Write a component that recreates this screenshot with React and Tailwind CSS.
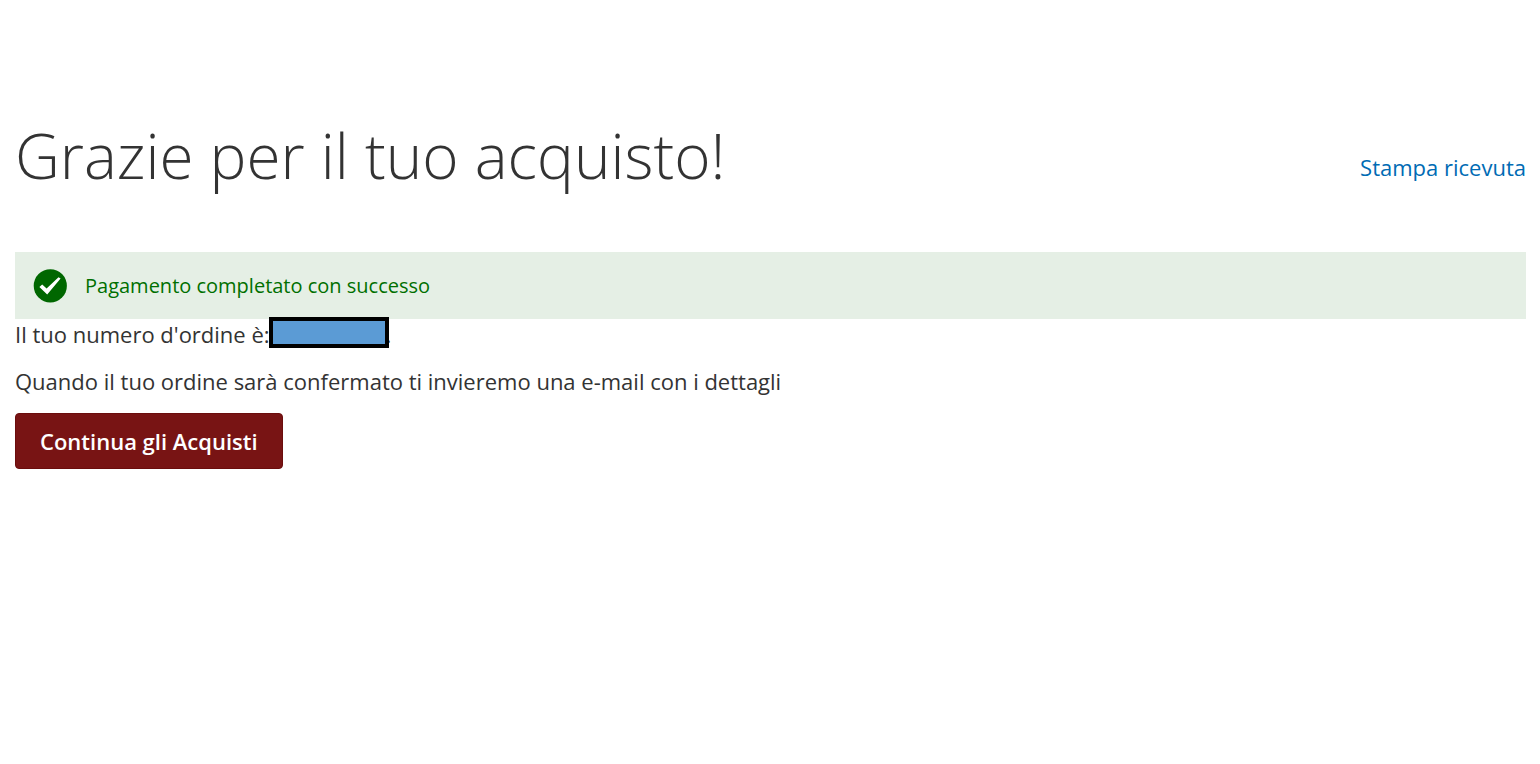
export default function App() {
  return (
    <main className="min-h-screen bg-white pt-[111px] pr-[14px] pl-[15px] font-['Open_Sans','Noto_Sans',sans-serif] text-[22px] leading-[30px] text-[#333333]">
      <header className="flex items-center justify-between pb-[53px]">
        <h1 className="text-[62px] font-light leading-[88px]">Grazie per il tuo acquisto!</h1>
        <a href="#ricevuta" className="pt-6 text-[#006bb4]">Stampa ricevuta</a>
      </header>
      <div role="status" className="flex h-[67px] items-center gap-[18px] bg-[#e5efe5] pl-[18px] text-[20px] text-[#006f00]">
        <svg viewBox="0 0 34 34" className="size-[34px]" aria-hidden="true">
          <circle cx="17.3" cy="16.8" r="16.6" fill="#006700" />
          <path d="M6.4 18 9.2 15.5 13.6 19.4 25.5 8.2 27.6 9.6 14.2 25.6Z" fill="#fff" />
        </svg>
        <p>Pagamento completato con successo</p>
      </div>
      <p className="flex items-center">
        Il tuo numero d'ordine è:
        <span className="relative z-10 -mt-0.5 -mr-[3px] -ml-px h-[31px] w-[120px] self-start border-4 border-black bg-[#5b9bd5]" />
        .
      </p>
      <p className="mt-[17px]">Quando il tuo ordine sarà confermato ti invieremo una e-mail con i dettagli</p>
      <button type="button" className="mt-[17px] h-14 rounded-[4px] border border-[#6b0d0d] bg-[#781414] px-6 font-semibold text-white">
        Continua gli Acquisti
      </button>
    </main>
  );
}
